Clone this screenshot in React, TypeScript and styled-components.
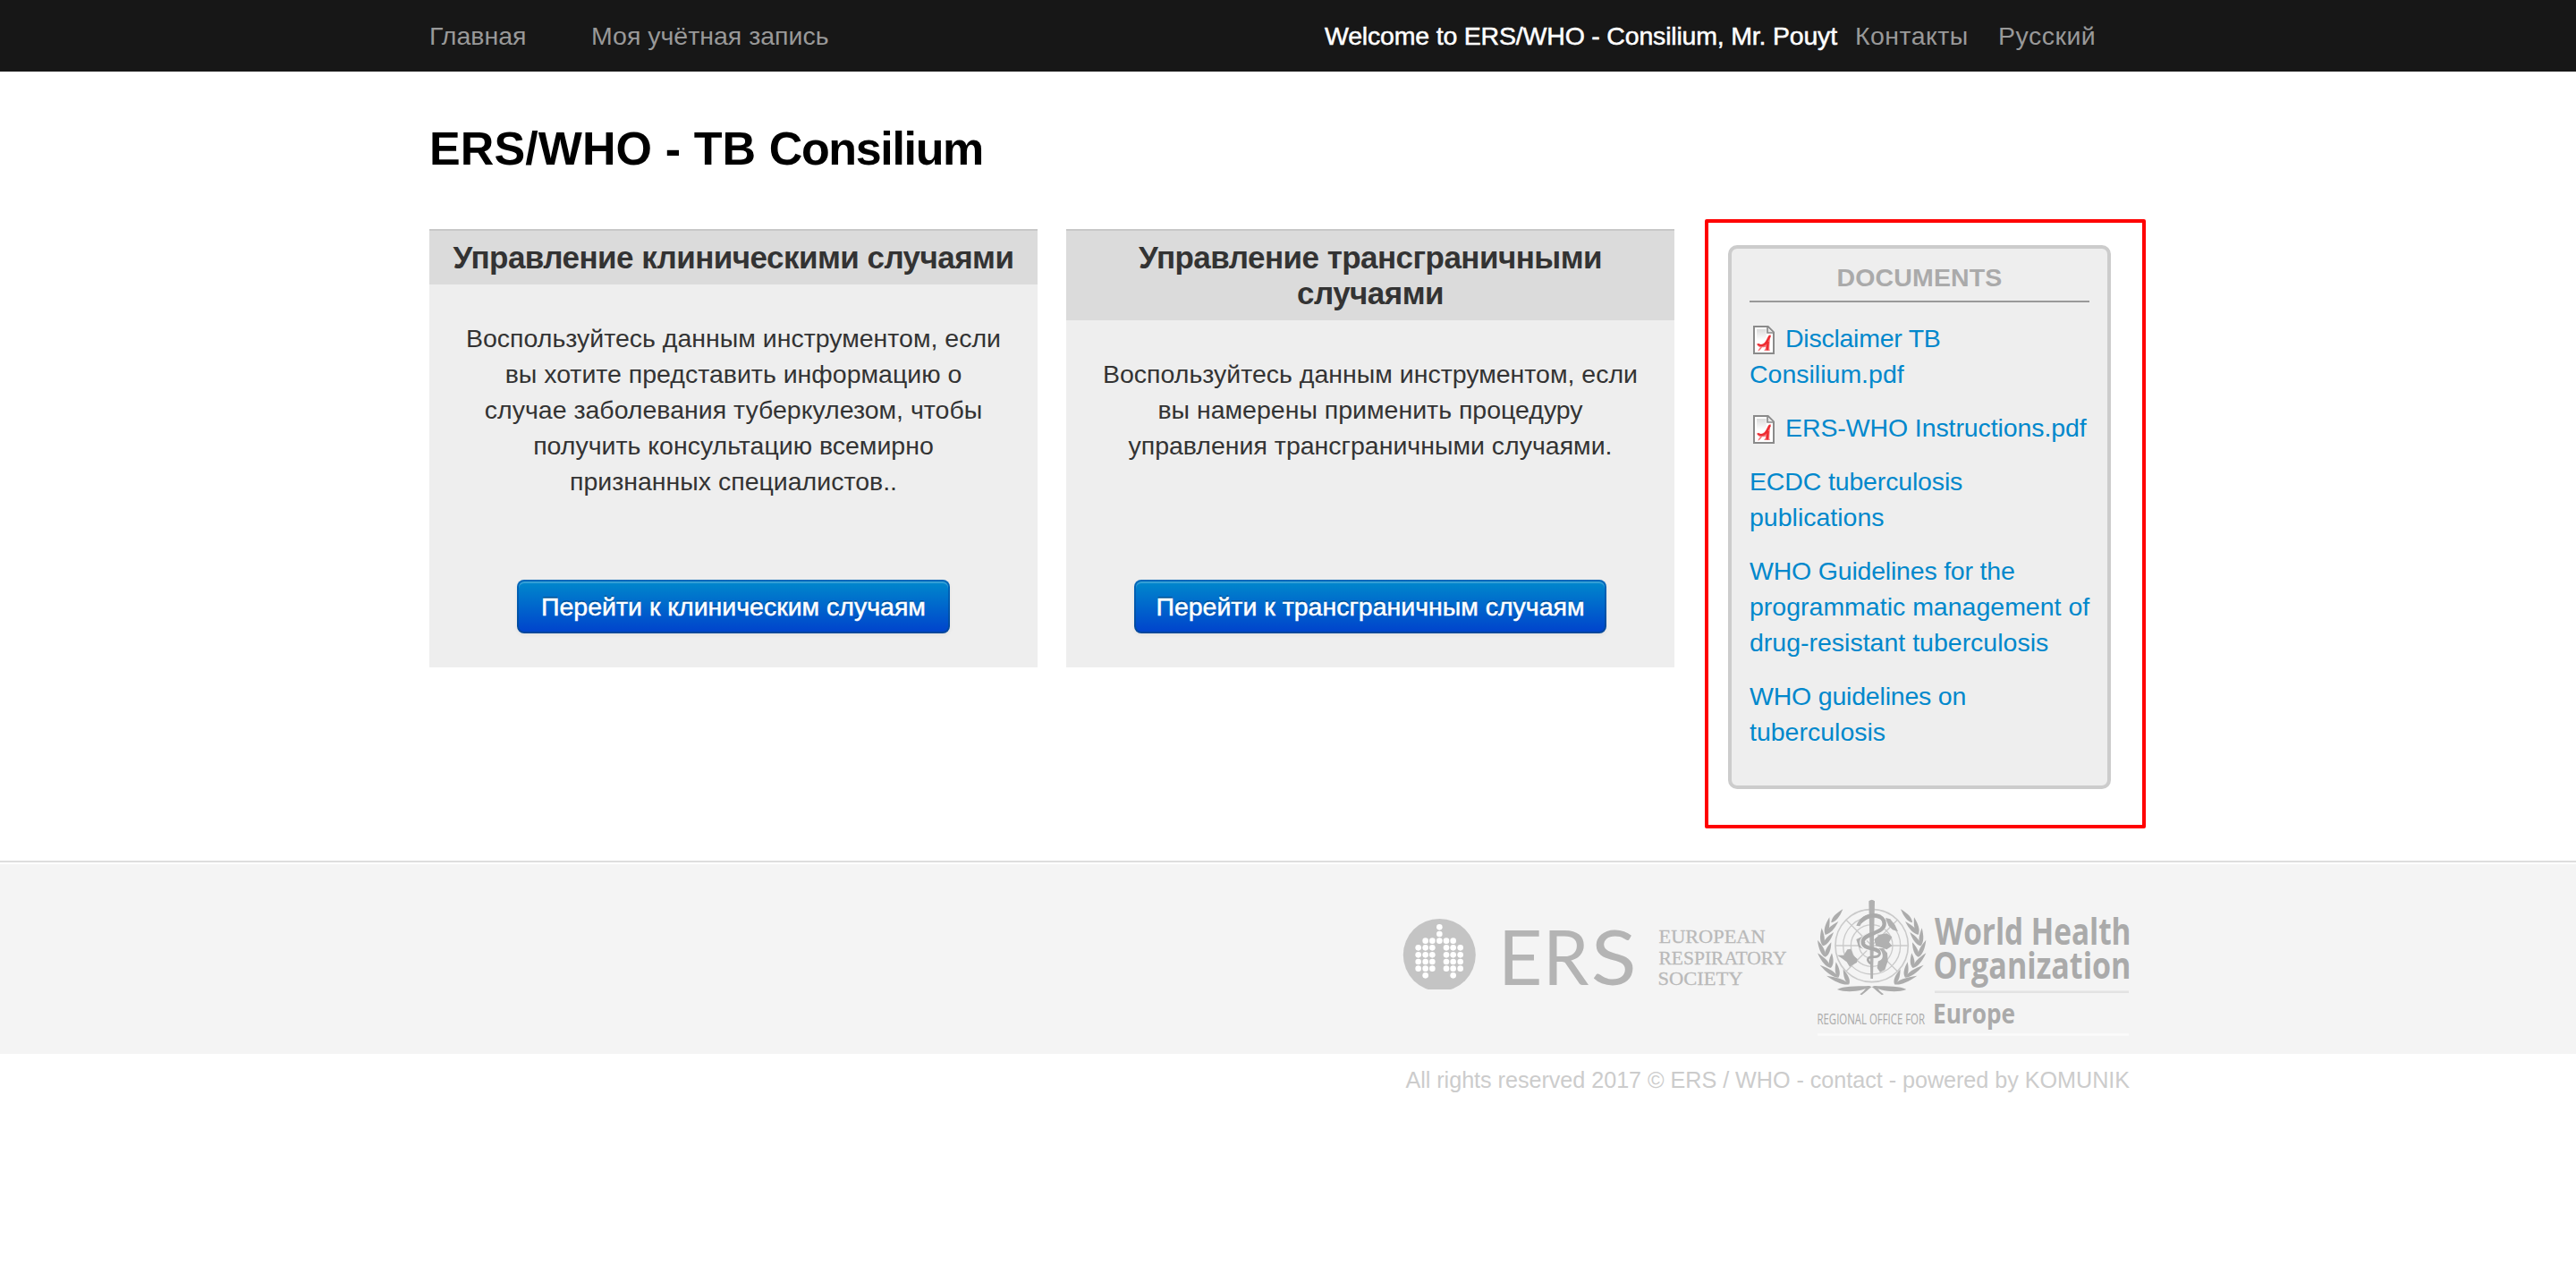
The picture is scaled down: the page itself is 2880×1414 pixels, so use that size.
import React from "react";
import styled, { createGlobalStyle } from "styled-components";

const GlobalStyle = createGlobalStyle`
  * { box-sizing: border-box; }
  body {
    margin: 0;
    background: #fff;
    color: #333;
    font-family: "Liberation Sans", Arial, sans-serif;
    font-size: 28.5px;
    line-height: 40px;
  }
`;

const Container = styled.div`
  width: 1920px;
  margin: 0 auto;
`;

const TopBar = styled.header`
  height: 80px;
  background: #171717;
`;

const Nav = styled(Container).attrs({ as: "nav" })`
  display: flex;
  align-items: center;
  height: 80px;
`;

const NavLink = styled.a<{ $width: number; $spacing?: number }>`
  flex: 0 0 ${(p) => p.$width}px;
  color: #999;
  white-space: nowrap;
  letter-spacing: ${(p) => p.$spacing ?? 0}px;
`;

const Welcome = styled.span`
  flex: 0 0 593px;
  margin-left: auto;
  color: #fff;
  white-space: nowrap;
  letter-spacing: -0.19px;
  -webkit-text-stroke: 0.5px #fff;
`;

const PageTitle = styled.h1`
  margin: 0;
  padding: 46px 0 50px;
  color: #000;
  font-size: 52px;
  line-height: 80px;
  letter-spacing: 0.1px;
`;

const TitleTail = styled.span`
  letter-spacing: -1.35px;
`;

const Columns = styled.div`
  display: flex;
  align-items: flex-start;
  height: 706px;
`;

const Card = styled.section`
  display: flex;
  flex-direction: column;
  align-items: center;
  width: 680px;
  height: 490px;
  margin-right: 32px;
  padding-bottom: 38px;
  background: #eee;
`;

const CardTitle = styled.h2`
  align-self: stretch;
  margin: 0;
  padding: 10px 0;
  border-top: 2px solid #c8c8c8;
  background: #dbdbdb;
  font-size: 35px;
  line-height: 40px;
  letter-spacing: -0.54px;
  text-align: center;
  white-space: pre;
`;

const CardText = styled.p`
  margin: 40px 0 0;
  text-align: center;
  white-space: pre;
`;

const CardButton = styled.button<{ $width: number }>`
  width: ${(p) => p.$width}px;
  height: 60px;
  margin-top: auto;
  padding: 0;
  border: 2px solid transparent;
  border-radius: 8px;
  background: linear-gradient(#0088cc, #0044cc) padding-box, linear-gradient(#0068bb, #00469c) border-box;
  box-shadow: inset 0 2px 0 rgba(255, 255, 255, 0.2), 0 2px 4px rgba(0, 0, 0, 0.05);
  color: #fff;
  font: 28.5px/40px "Liberation Sans", Arial, sans-serif;
  text-shadow: 0 -2px 0 rgba(0, 0, 0, 0.25);
  white-space: nowrap;
  -webkit-text-stroke: 0.5px #fff;
`;

const Highlight = styled.aside`
  width: 493px;
  height: 681px;
  margin: -11px 0 0 2px;
  padding: 25px 22px;
  border: 4px solid #f00;
  border-radius: 2px;
`;

const Documents = styled.div`
  width: 428px;
  height: 608px;
  padding: 12px 20px 20px;
  border: 4px solid #ccc;
  border-radius: 10px;
  background: #eee;
`;

const DocumentsTitle = styled.h3`
  height: 48px;
  margin: 0 0 20px;
  border-bottom: 2px solid #999;
  color: #aaa;
  font-size: 28.5px;
  line-height: 40px;
  letter-spacing: 0.15px;
  text-align: center;
`;

const DocumentItem = styled.p`
  margin: 0 0 20px;
  white-space: nowrap;
`;

const DocumentLink = styled.a`
  color: #08c;
`;

const Line = styled.span<{ $spacing: number }>`
  letter-spacing: ${(p) => p.$spacing}px;
`;

const IconSlot = styled.span`
  display: inline-block;
  width: 32px;
  height: 32px;
  margin-right: 8px;
  vertical-align: -8px;

  svg { display: block; }
`;

const FooterBand = styled.footer`
  height: 216px;
  border-top: 2px solid #ddd;
  background: #f4f4f4;
  box-shadow: inset 0 2px 0 #fff;
`;

const Logos = styled(Container)`
  display: flex;
  justify-content: flex-end;
  gap: 28px;
  padding: 36px 16px 0 0;

  svg { overflow: visible; }
`;

const Copyright = styled(Container)`
  padding: 9px 19px 0 0;
  color: #ccc;
  font-size: 25.2px;
  letter-spacing: -0.04px;
  text-align: right;
`;

const PdfIcon = () => (
  <svg width="32" height="32" viewBox="0 0 96 96">
    <defs>
      <linearGradient id="sheet" x1="0" y1="0" x2="0" y2="1">
        <stop offset="0" stopColor="#dcdcdc" />
        <stop offset="1" stopColor="#fff" />
      </linearGradient>
    </defs>
    <path d="M15 3H62L81 22V93H15Z" fill="#fff" stroke="#8a8a8a" strokeWidth="6" />
    <path d="M24 12H56V50H24Z" fill="url(#sheet)" />
    <path d="M60 5V24H80" fill="#e6e6e6" stroke="#8a8a8a" strokeWidth="5" />
    <path d="M72 31C60 31 61 46 50 57C42 64 36 65 25 59C23 64 30 70 36 73C32 77 30 80 28 86C34 84 38 79 42 73C46 73 50 72 54 71C54 77 51 81 48 84H69C66 80 67 74 67 68C68 56 68 42 72 31Z" fill="#f4787c" />
    <path d="M69 34C61 44 61 54 52 62C44 68 36 68 28 62M62 54L59 82" fill="none" stroke="#ee2a30" strokeWidth="7" />
  </svg>
);

const lungDots: [number, number][] = [
  [208, 169], [208, 192],
  ...[161, 184, 208, 231, 254].map((x): [number, number] => [x, 215]),
  ...[238, 262, 285, 308].flatMap((y) =>
    [137, 161, 184, 231, 254, 278].map((x): [number, number] => [x, y])
  ),
  [161, 331], [254, 331],
];

const ErsLogo = () => (
  <svg width="436" height="160" viewBox="1568 1000 436 160">
    <clipPath id="disc"><rect x="1560" y="1020" width="100" height="86" /></clipPath>
    <circle cx="1609.3" cy="1067.5" r="40.5" fill="#c4c4c4" clipPath="url(#disc)" />
    {lungDots.map(([x, y]) => (
      <circle key={`${x}-${y}`} cx={1540 + x / 3} cy={980 + y / 3} r="3.3" fill="#fff" />
    ))}
    <g fill="#b4b4b4" fontFamily="Lato, sans-serif" fontSize="86">
      <text x="1674.8" y="1101.3">E</text>
      <text transform="translate(1725 1101.3) scale(0.955 1)">R</text>
      <text transform="translate(1778.7 1101.3) scale(1.09 1)">S</text>
    </g>
    <g fill="#b9b9b9" stroke="#b9b9b9" strokeWidth="0.3" fontFamily="Liberation Serif, serif" fontSize="22">
      <text x="1854.5" y="1053.7" textLength="119" lengthAdjust="spacingAndGlyphs">EUROPEAN</text>
      <text x="1854.5" y="1077.7" textLength="143" lengthAdjust="spacingAndGlyphs">RESPIRATORY</text>
      <text x="1853.5" y="1101.3" textLength="95" lengthAdjust="spacingAndGlyphs">SOCIETY</text>
    </g>
  </svg>
);

/* Laurel leaves as base x, base y, tip x, tip y. */
const leaves: [number, number, number, number][] = [
  [64, 94, 103, 49], [44, 134, 58, 76], [36, 172, 32, 112], [44, 209, 18, 152], [62, 246, 18, 196], [88, 278, 26, 236], [124, 301, 48, 272],
  [44, 134, 88, 90], [36, 172, 72, 126], [44, 209, 64, 160], [62, 246, 66, 196], [88, 278, 80, 226], [124, 301, 104, 250],
];

const Branch = () => (
  <g fill="#acacac">
    {leaves.map(([x, y, tx, ty]) => {
      const len = Math.hypot(tx - x, ty - y);
      const turn = (Math.atan2(tx - x, y - ty) * 180) / Math.PI;
      return (
        <path
          key={`${tx}-${ty}`}
          transform={`translate(${x} ${y}) rotate(${turn.toFixed(1)})`}
          d={`M0 0C10 ${-len * 0.2} 9 ${-len * 0.55} 0 ${-len}C-9 ${-len * 0.55} -10 ${-len * 0.2} 0 0Z`}
        />
      );
    })}
    <path d="M84 318C105 306 140 308 196 306C178 322 120 332 84 318Z" />
    <path d="M186 306C178 318 170 328 160 334L166 337C178 328 188 318 200 309Z" />
  </g>
);

const WhoEmblem = () => (
  <g transform="translate(2026 1000) scale(0.33333)">
    <g fill="none" stroke="#cacaca" strokeWidth="4">
      <circle cx="200" cy="171" r="122" strokeWidth="5" />
      <circle cx="200" cy="171" r="96" />
      <circle cx="200" cy="171" r="70" />
      <circle cx="200" cy="171" r="42" />
      <path d="M78 171H322M114 85L286 257M286 85L114 257" />
    </g>
    <g fill="#b0b0b0">
      <path d="M84 203L106 203L118 184L130 182L138 204L152 216L150 228L138 234L126 242L116 226L100 214Z" />
      <path d="M208 150L226 134L250 130L268 142L258 160L268 172L250 184L234 178L214 172Z" />
      <path d="M214 180L238 180L252 196L254 222L244 252L228 260L218 246L222 220Z" />
      <path d="M148 104C156 84 172 68 194 66L192 80C176 84 164 96 160 106Z" />
      <path d="M246 78L262 82L278 102L288 124L270 118L256 104Z" />
      <path d="M148 150L168 140L180 160L172 182L156 176Z" />
    </g>
    <path d="M240 90C250 132 172 128 169 160C167 188 226 176 227 204C228 224 182 210 188 232" fill="none" stroke="#f4f4f4" strokeWidth="19" />
    <path d="M190 22Q200 12 210 22L204 282H196Z" fill="#b0b0b0" />
    <path d="M166 88C196 58 242 68 242 98C242 132 172 128 170 158C169 184 208 176 222 190" fill="none" stroke="#aaa" strokeWidth="13" strokeLinecap="round" />
    <path d="M216 183C238 198 222 210 208 209C188 208 180 216 194 230" fill="none" stroke="#aaa" strokeWidth="8" strokeLinecap="round" />
    <Branch />
    <g transform="translate(400 0) scale(-1 1)"><Branch /></g>
  </g>
);

const WhoLogo = () => (
  <svg width="352" height="160" viewBox="2032 1000 352 160">
    <WhoEmblem />
    <g fill="#aaa" fontFamily="Open Sans, sans-serif" fontWeight="700">
      <text x="2163" y="1055.7" fontSize="42" textLength="219.5" lengthAdjust="spacingAndGlyphs">World Health</text>
      <text x="2161.5" y="1093.7" fontSize="42" textLength="221" lengthAdjust="spacingAndGlyphs">Organization</text>
      <text x="2161" y="1144.3" fontSize="31" textLength="92" lengthAdjust="spacingAndGlyphs">Europe</text>
      <text x="2031.5" y="1145" fontSize="15.5" fontWeight="400" textLength="120.5" lengthAdjust="spacingAndGlyphs">REGIONAL OFFICE FOR</text>
    </g>
    <path d="M2163 1108.7H2380" stroke="#e2e2e2" strokeWidth="2.5" />
    <path d="M2032 1156.5H2380" stroke="#fbfbfb" strokeWidth="2.5" />
  </svg>
);

const cards = [
  {
    title: "Управление клиническими случаями",
    text: "Воспользуйтесь данным инструментом, если\nвы хотите представить информацию о\nслучае заболевания туберкулезом, чтобы\nполучить консультацию всемирно\nпризнанных специалистов..",
    button: "Перейти к клиническим случаям",
    width: 484,
  },
  {
    title: "Управление трансграничными\nслучаями",
    text: "Воспользуйтесь данным инструментом, если\nвы намерены применить процедуру\nуправления трансграничными случаями.",
    button: "Перейти к трансграничным случаям",
    width: 528,
  },
];

const documents: { pdf?: boolean; lines: [string, number][] }[] = [
  { pdf: true, lines: [["Disclaimer TB", -0.25], ["Consilium.pdf", 0]] },
  { pdf: true, lines: [["ERS-WHO Instructions.pdf", -0.1]] },
  { lines: [["ECDC tuberculosis", -0.15], ["publications", 0]] },
  { lines: [["WHO Guidelines for the", -0.2], ["programmatic management of", 0], ["drug-resistant tuberculosis", 0]] },
  { lines: [["WHO guidelines on", -0.2], ["tuberculosis", 0]] },
];

export default function App() {
  return (
    <>
      <GlobalStyle />
      <TopBar>
        <Nav>
          <NavLink $width={181}>Главная</NavLink>
          <NavLink $width={300}>Моя учётная запись</NavLink>
          <Welcome>Welcome to ERS/WHO - Consilium, Mr. Pouyt</Welcome>
          <NavLink $width={160} $spacing={0.45}>Контакты</NavLink>
          <NavLink $width={166} $spacing={0.5}>Русский</NavLink>
        </Nav>
      </TopBar>
      <Container as="main">
        <PageTitle>ERS/WHO - TB <TitleTail>Consilium</TitleTail></PageTitle>
        <Columns>
          {cards.map((card) => (
            <Card key={card.title}>
              <CardTitle>{card.title}</CardTitle>
              <CardText>{card.text}</CardText>
              <CardButton $width={card.width}>{card.button}</CardButton>
            </Card>
          ))}
          <Highlight>
            <Documents>
              <DocumentsTitle>DOCUMENTS</DocumentsTitle>
              {documents.map((doc) => (
                <DocumentItem key={doc.lines[0][0]}>
                  {doc.pdf && <IconSlot><PdfIcon /></IconSlot>}
                  <DocumentLink>
                    {doc.lines.map(([text, spacing], i) => (
                      <React.Fragment key={text}>
                        {i > 0 && <br />}
                        <Line $spacing={spacing}>{text}</Line>
                      </React.Fragment>
                    ))}
                  </DocumentLink>
                </DocumentItem>
              ))}
            </Documents>
          </Highlight>
        </Columns>
      </Container>
      <FooterBand>
        <Logos>
          <ErsLogo />
          <WhoLogo />
        </Logos>
      </FooterBand>
      <Copyright>All rights reserved 2017 © ERS / WHO - contact - powered by KOMUNIK</Copyright>
    </>
  );
}
